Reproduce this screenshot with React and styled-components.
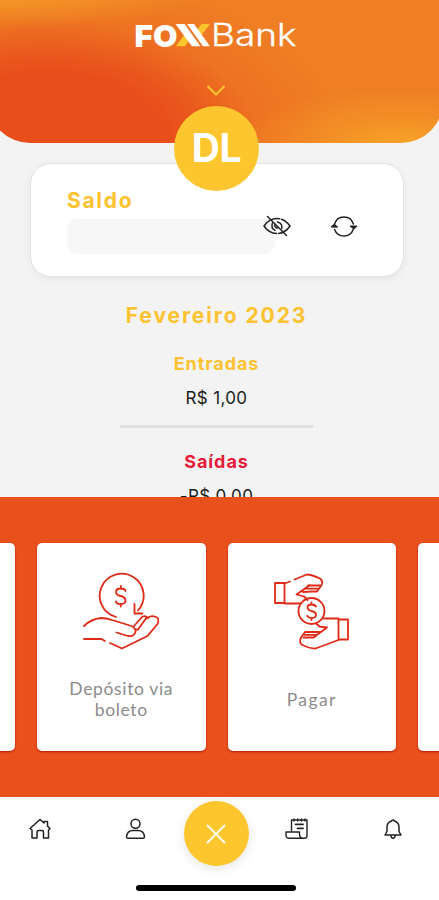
import React from "react";
import styled, { createGlobalStyle } from "styled-components";

const Global = createGlobalStyle`
  * { box-sizing: border-box; }
  body { margin: 0; background: #f3f3f3; font-family: "Inter", "Liberation Sans", sans-serif; }
`;

const Screen = styled.div`
  width: 439px;
  height: 900px;
  overflow: hidden;
  display: flex;
  flex-direction: column;
  background: #f3f3f3;
`;

const Header = styled.header`
  flex: none;
  width: 455px;
  height: 142.5px;
  margin-left: -12px;
  padding: 22px 0 0 12px;
  border-radius: 0 0 42px 42px;
  display: flex;
  flex-direction: column;
  align-items: flex-start;
  background:
    radial-gradient(ellipse 180px 62px at 92% 104%, rgba(248, 168, 42, 1) 0%, rgba(246, 158, 38, 0.55) 45%, rgba(240, 126, 36, 0) 100%),
    radial-gradient(ellipse 190px 34px at 6% -4%, rgba(246, 158, 38, 0.9) 0%, rgba(240, 130, 36, 0) 100%),
    radial-gradient(ellipse 290px 160px at 13% 96%, #e84e1b 0%, #e84e1b 40%, rgba(233, 84, 29, 0.85) 54%, rgba(236, 102, 32, 0.5) 72%, rgba(239, 126, 36, 0) 100%),
    #ef7e24;
`;

const Logo = styled.svg`
  display: block;
  margin-left: 132px;
  overflow: visible;
`;

const Chevron = styled.svg`
  display: block;
  margin: 31px 0 0 206px;
`;

const Column = styled.main`
  flex: none;
  width: 433px;
  height: 354.5px;
  overflow: visible;
  display: flex;
  flex-direction: column;
  align-items: center;
`;

const Avatar = styled.div`
  position: relative;
  z-index: 2;
  flex: none;
  width: 85px;
  height: 85px;
  margin-top: -36.5px;
  margin-bottom: -28px;
  padding-bottom: 3px;
  border-radius: 50%;
  background: #fdc62f;
  color: #fff;
  display: flex;
  align-items: center;
  justify-content: center;
  font: 700 39px "Inter", sans-serif;
  letter-spacing: -0.4px;
`;

const BalanceCard = styled.section`
  flex: none;
  width: 374px;
  height: 114px;
  padding: 25px 43px 0 36.5px;
  border: 1px solid #e2e3e3;
  border-radius: 21px;
  background: #fff;
  box-shadow: 0 3px 9px rgba(0, 0, 0, 0.05);
`;

const BalanceTitle = styled.h2`
  margin: 0;
  height: 30px;
  font: 700 21px/24px "Inter", sans-serif;
  letter-spacing: 1.7px;
  color: #fdc22f;
`;

const BalanceRow = styled.div`
  display: flex;
  align-items: flex-start;
`;

const HiddenAmount = styled.div`
  width: 208px;
  height: 35px;
  border-radius: 11px;
  background: #f7f7f7;
`;

const IconButton = styled.button`
  flex: none;
  display: block;
  width: 28px;
  height: 24px;
  padding: 0;
  border: 0;
  background: none;
  margin: -5px 0 0 ${(p) => p.$gap}px;
  svg { display: block; }
`;

const Month = styled.h1`
  margin: 24.5px 0 0;
  font: 700 21px/28px "Inter", sans-serif;
  letter-spacing: 1.9px;
  color: #fdc22f;
`;

const EntryTitle = styled.h3`
  margin: ${(p) => p.$top}px 0 0;
  font: 700 18px/24px "Inter", sans-serif;
  letter-spacing: 0.95px;
  color: ${(p) => p.$color};
`;

const EntryValue = styled.div`
  margin-top: 10px;
  font: 400 17px/24px "Inter", sans-serif;
  letter-spacing: 0.35px;
  color: #1c1c1c;
`;

const Divider = styled.div`
  flex: none;
  width: 193px;
  height: 3px;
  margin-top: 15px;
  background: #dfdfdf;
`;

const Carousel = styled.section`
  position: relative;
  z-index: 1;
  flex: none;
  width: 439px;
  height: 300px;
  padding: 46px 6px 0 0;
  display: flex;
  justify-content: center;
  align-items: flex-start;
  gap: 22px;
  background: #e8501c;
`;

const ActionCard = styled.div`
  flex: none;
  width: 168.5px;
  height: 208px;
  padding-top: 28px;
  border-radius: 5px;
  background: #fff;
  box-shadow: 0 1px 2px rgba(176, 20, 0, 0.9);
  display: flex;
  flex-direction: column;
  align-items: center;
  svg { display: block; }
`;

const ActionLabel = styled.div`
  height: 44px;
  margin-top: 26px;
  display: flex;
  align-items: center;
  text-align: center;
  font: 400 17.5px/21px "Lato", sans-serif;
  letter-spacing: ${(p) => p.$spacing}px;
  color: #8b8b8b;
`;

const TabBar = styled.nav`
  flex: none;
  height: 103px;
  width: 439px;
  padding: 4px 0 0 27.5px;
  background: #fff;
`;

const TabRow = styled.div`
  display: flex;
  align-items: flex-start;
`;

const Tab = styled.button`
  flex: none;
  width: 24px;
  height: 24px;
  padding: 0;
  margin: 16px 0 0 ${(p) => p.$before}px;
  border: 0;
  background: none;
  svg { display: block; }
`;

const CloseButton = styled.button`
  flex: none;
  width: 65px;
  height: 65px;
  margin-left: 36px;
  padding: 0;
  border: 0;
  border-radius: 50%;
  background: #fdc62f;
  box-shadow: 0 3px 12px rgba(0, 0, 0, 0.1);
  display: flex;
  align-items: center;
  justify-content: center;
`;

const HomeIndicator = styled.div`
  width: 160px;
  height: 6px;
  margin: 19px 0 0 108.5px;
  border-radius: 3px;
  background: #000;
`;

const Stroke = ({ w, h, box, color = "#222", sw = 1.5, children }) => (
  <svg width={w} height={h} viewBox={box || `0 0 ${w} ${h}`} fill="none" stroke={color}
    strokeWidth={sw} strokeLinecap="round" strokeLinejoin="round">
    {children}
  </svg>
);

const FoxxLogo = () => (
  <Logo width="168" height="32" viewBox="132 22 168 32">
    <text x="134.5" y="46.5" textLength="43" lengthAdjust="spacingAndGlyphs" fill="#fff" fontFamily="Inter" fontWeight="900" fontSize="30.5">FO</text>
    <path d="M176 46.3 L184.5 34.5 L189 40.5 L185 46.3Z M201.5 24 H210 L200.5 36.5 L196.3 31Z" fill="#fdc62f" />
    <path d="M175.5 24 H184.5 L200.5 46.3 H192Z M187 24 H194 L210 46.3 H203Z" fill="#fff" />
    <text x="211" y="46.3" textLength="85.5" lengthAdjust="spacingAndGlyphs" fill="#fff" stroke="#fff" strokeWidth="0.3" fontFamily="Inter" fontWeight="300" fontSize="30.5">Bank</text>
  </Logo>
);

const EyeOff = () => (
  <Stroke w={28} h={24}>
    <path d="M1 12 C4 7.5 8.5 4.5 14 4.5 S24 7.5 27 12 C24 16.5 19.5 19.5 14 19.5 S4 16.5 1 12Z" strokeDasharray="18 2 25 2" />
    <path d="M9.5 9 Q7.5 14 12 16.3 M14.5 8 Q19.5 9 18.8 14.5 M11.5 11 Q12 14 14.5 14" />
    <path d="M4.5 2.5 L23.5 21.5" />
  </Stroke>
);

const Refresh = () => (
  <Stroke w={28} h={24}>
    <path d="M4.5 10 A9.9 9.9 0 0 1 23.4 10 M23.2 15.5 A9.9 9.9 0 0 1 4.6 15.5" />
    <path d="M1.5 12.8 L4.4 10.6 L7.2 13Z M20.6 12.2 L23.8 14.6 L26.5 12.2Z" fill="#222" />
  </Stroke>
);

const DepositIcon = () => (
  <Stroke w={80} h={80} box="81 571 80 80" color="#df2a18" sw={1.8}>
    <path d="M116 617 A22 22 0 1 1 138 610.5" />
    <path d="M134.5 604 V613.5 H142.5" />
    <path d="M125.5 591 Q125 588.5 120.5 588.5 Q116 588.5 116 592 Q116 595 120.5 596 Q125.5 597.2 125.5 600.5 Q125.5 604 120.8 604 Q116.5 604 116 601.5 M120.8 586 V588.5 M120.8 604 V606.5" />
    <path d="M84 626 Q91 619 101 618 Q106 618 112 620 L130 625.5 Q136 627.5 135.5 632 Q134 637 128 636 L116.5 632.5" />
    <path d="M134 626 L141.5 617.5 Q144 615 147 617 L138 629.5 H135.5 M147 618.5 L150 616.5 Q155 615 158 618.5 Q159 621 157.5 624 L147.5 636 L122 648.5 L110 643" />
    <path d="M84 639 H101.5 L105 641" />
  </Stroke>
);

const PayIcon = () => (
  <Stroke w={80} h={80} box="272 571 80 80" color="#df2a18" sw={1.8}>
    <rect x="275" y="583" width="9.5" height="20" />
    <path d="M284.5 583.5 L290 581.5 M294.5 579.5 L307 574.5 Q311 574.5 320 578.5 Q324 582 321 586 L317 591.5 H313" />
    <path d="M308 585.5 H320 M296.5 594.5 L310 585 M296.5 594.5 L304 596.5 L307.5 600 M303 592 L312 591.5 M305 588.6 H318" />
    <path d="M284.5 603.5 H301" />
    <circle cx="311.5" cy="611" r="13" />
    <path d="M316 606.5 Q315 604.5 311.5 604.5 Q307.5 604.5 307.5 607.5 Q307.5 610 311.5 611 Q316 612 316 614.8 Q316 618 311.8 618 Q308 618 307.2 615.8 M311.5 602.5 V604.5 M311.5 618 V620" />
    <rect x="338.5" y="619.5" width="9.5" height="20" />
    <path d="M323.5 618.5 H338.5 M338.5 640 L315.5 648.5 Q309 648.5 301.5 644.5 Q299 641.5 301 637.5 L305 632 H312" />
    <path d="M303.5 637.5 H314 M304.5 634.8 H317 M308.5 632 L321 631.8 M327 627.5 L313.5 637.5 M327 627.5 L319.5 626.5 L316 623.5" />
  </Stroke>
);

export default function App() {
  return (
    <>
      <Global />
      <Screen>
        <Header>
          <FoxxLogo />
          <Chevron width="20" height="12" viewBox="0 0 20 12" fill="none" stroke="#fdc62f" strokeWidth="2">
            <path d="M1.5 1 L10 9.5 L18.5 1" />
          </Chevron>
        </Header>
        <Column>
          <Avatar>DL</Avatar>
          <BalanceCard>
            <BalanceTitle>Saldo</BalanceTitle>
            <BalanceRow>
              <HiddenAmount />
              <IconButton $gap={-12} aria-label="Mostrar saldo"><EyeOff /></IconButton>
              <IconButton $gap={38.5} aria-label="Atualizar"><Refresh /></IconButton>
            </BalanceRow>
          </BalanceCard>
          <Month>Fevereiro 2023</Month>
          <EntryTitle $top={22.5} $color="#fdc22f">Entradas</EntryTitle>
          <EntryValue>R$ 1,00</EntryValue>
          <Divider />
          <EntryTitle $top={22} $color="#e51b39">Saídas</EntryTitle>
          <EntryValue>-R$ 0,00</EntryValue>
        </Column>
        <Carousel>
          <ActionCard />
          <ActionCard>
            <DepositIcon />
            <ActionLabel $spacing={0.65}>Depósito via<br />boleto</ActionLabel>
          </ActionCard>
          <ActionCard>
            <PayIcon />
            <ActionLabel $spacing={1.4}>Pagar</ActionLabel>
          </ActionCard>
          <ActionCard />
        </Carousel>
        <TabBar>
          <TabRow>
            <Tab $before={0} aria-label="Início">
              <Stroke w={24} h={24}>
                <path d="M2 11.5 L12 2.5 L16 6 V4.5 H19.5 V9 L22 11.5 L20.5 13 V21 H15.5 V15 Q15.5 13.5 14 13.5 H10.5 Q9 13.5 9 15 V21 H4 V13Z" />
              </Stroke>
            </Tab>
            <Tab $before={72} aria-label="Perfil">
              <Stroke w={24} h={24}>
                <circle cx="11.5" cy="6.8" r="4.5" />
                <path d="M2.5 20 Q3 13.5 9 13.5 H14 Q20 13.5 20.5 20 Q20.5 21.3 19 21.3 H4 Q2.5 21.3 2.5 20Z" />
              </Stroke>
            </Tab>
            <CloseButton aria-label="Fechar">
              <Stroke w={22} h={22} color="#fff" sw={1.8}><path d="M2.5 2.5 L19.5 19.5 M19.5 2.5 L2.5 19.5" /></Stroke>
            </CloseButton>
            <Tab $before={36.5} aria-label="Extrato">
              <Stroke w={24} h={24} sw={1.4}>
                <path d="M6.5 13.5 V3 H22 V19 Q22 21.3 19.5 21.3 H4 Q1.5 21.3 1 18.5 V15 H14.5 V18 Q15 21.3 18 21.3" />
                <path d="M10.5 7.3 H18 M12.5 11.3 H18" strokeWidth="1.8" />
                <path d="M9 2 V4 M12.8 2 V4 M16.5 2 V4 M20 2 V4" />
              </Stroke>
            </Tab>
            <Tab $before={72} aria-label="Notificações">
              <Stroke w={24} h={24}>
                <path d="M10.5 4 Q12 1.8 13.5 4 Q18 5.5 18 10 V14.5 L20 18 H4 L6 14.5 V10 Q6 5.5 10.5 4Z M9.8 18.5 Q10.2 21.3 12 21.3 T14.2 18.5" />
              </Stroke>
            </Tab>
          </TabRow>
          <HomeIndicator />
        </TabBar>
      </Screen>
    </>
  );
}
